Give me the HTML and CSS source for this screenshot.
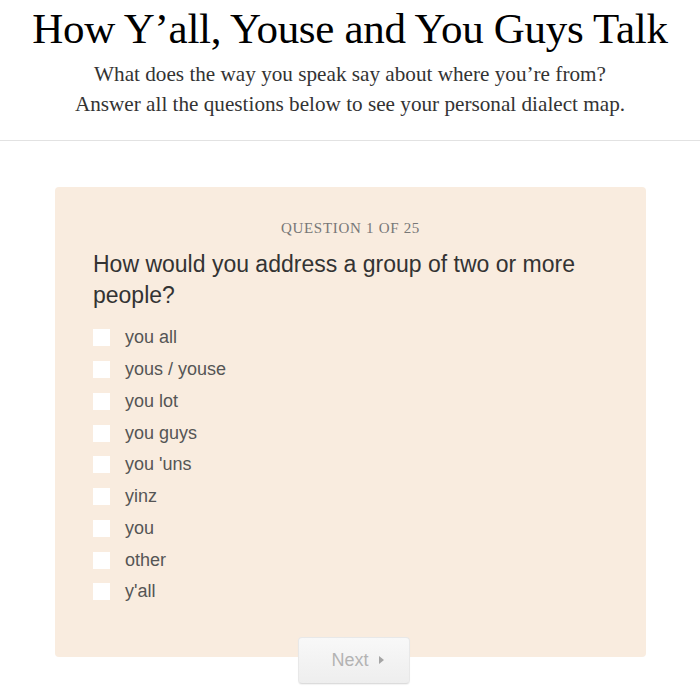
FILE: index.html
```html
<!DOCTYPE html>
<html>
<head>
<meta charset="utf-8">
<link rel="stylesheet" href="styles.css">
</head>
<body>
<header class="header">
  <h1 class="title">How Y’all, Youse and You Guys Talk</h1>
  <p class="dek">What does the way you speak say about where you’re from?<br>Answer all the questions below to see your personal dialect map.</p>
</header>
<main class="quiz">
  <section class="card">
    <div class="counter">QUESTION 1 OF 25</div>
    <h2 class="question">How would you address a group of two or more people?</h2>
    <ul class="options">
      <li class="option"><span class="box"></span><span class="label">you all</span></li>
      <li class="option"><span class="box"></span><span class="label">yous / youse</span></li>
      <li class="option"><span class="box"></span><span class="label">you lot</span></li>
      <li class="option"><span class="box"></span><span class="label">you guys</span></li>
      <li class="option"><span class="box"></span><span class="label">you 'uns</span></li>
      <li class="option"><span class="box"></span><span class="label">yinz</span></li>
      <li class="option"><span class="box"></span><span class="label">you</span></li>
      <li class="option"><span class="box"></span><span class="label">other</span></li>
      <li class="option"><span class="box"></span><span class="label">y'all</span></li>
    </ul>
  </section>
  <div class="nav">
    <button class="next">Next <span class="arrow"></span></button>
  </div>
</main>
</body>
</html>
```
FILE: styles.css
```css
html, body {
  margin: 0;
  padding: 0;
  background: #fff;
  overflow: hidden;
}
body {
  width: 700px;
  height: 692px;
}
.header {
  text-align: center;
  border-bottom: 1px solid #e2e2e2;
  padding-top: 4px;
  padding-bottom: 21px;
}
.title {
  margin: 0;
  font-family: "Liberation Serif", serif;
  font-weight: normal;
  font-size: 43px;
  line-height: 50px;
  color: #000;
  letter-spacing: -0.3px;
}
.dek {
  margin: 5px 0 0;
  font-family: "Liberation Serif", serif;
  font-size: 21.2px;
  line-height: 30px;
  color: #333;
}
.quiz {
  padding: 46px 54px 0 55px;
}
.card {
  background: #f9ecdf;
  border-radius: 4px;
  padding: 32px 38px 49px;
}
.counter {
  text-align: center;
  font-family: "Liberation Serif", serif;
  font-size: 15px;
  letter-spacing: 0.7px;
  color: #777;
  line-height: 18px;
}
.question {
  margin: 12px 0 11px;
  font-family: "Liberation Sans", sans-serif;
  font-weight: normal;
  font-size: 23px;
  line-height: 31px;
  color: #333;
}
.options {
  list-style: none;
  margin: 0;
  padding: 0;
}
.option {
  display: flex;
  align-items: center;
  height: 31.75px;
}
.box {
  width: 17px;
  height: 17px;
  background: #fff;
  margin-right: 15px;
  flex: none;
}
.label {
  font-family: "Liberation Sans", sans-serif;
  font-size: 18px;
  color: #555;
}
.nav {
  display: flex;
  justify-content: center;
  margin-top: -20px;
  padding-left: 6px;
}
.next {
  width: 112px;
  height: 47px;
  border: 1px solid #e8e8e8;
  border-bottom-color: #dcdcdc;
  border-radius: 4px;
  background: linear-gradient(#f8f8f8, #eeeeee);
  font-family: "Liberation Sans", sans-serif;
  font-size: 18px;
  color: #b3b3b3;
  display: flex;
  align-items: center;
  justify-content: center;
  gap: 10px;
  padding: 0 0 0 8px;
  box-shadow: 0 1px 1px rgba(0,0,0,0.05);
}
.arrow {
  width: 0;
  height: 0;
  border-left: 5px solid #a5a5a5;
  border-top: 4.5px solid transparent;
  border-bottom: 4.5px solid transparent;
}
```
